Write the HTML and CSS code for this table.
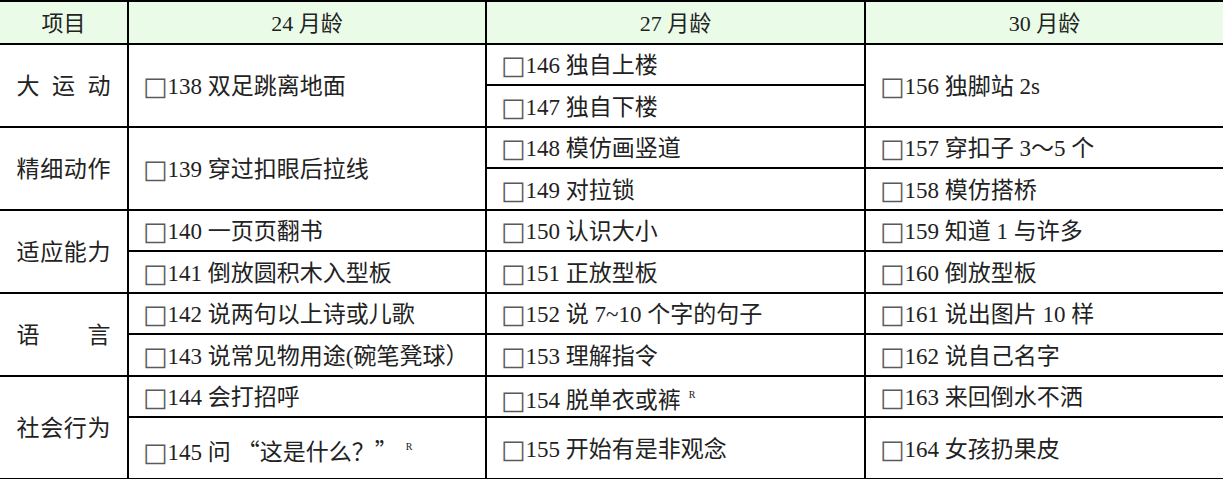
FILE: index.html
```html
<!DOCTYPE html>
<html lang="zh-CN">
<head>
<meta charset="utf-8">
<title>24-30 月龄</title>
<link rel="stylesheet" href="styles.css">
</head>
<body>
<table class="grid">
  <colgroup>
    <col class="c-label">
    <col class="c-24">
    <col class="c-27">
    <col class="c-30">
  </colgroup>
  <thead>
    <tr class="head">
      <th>项目</th>
      <th>24 月龄</th>
      <th>27 月龄</th>
      <th>30 月龄</th>
    </tr>
  </thead>
  <tbody>
    <tr>
      <td class="label" rowspan="2"><span class="lbl">大 运 动</span></td>
      <td rowspan="2"><span class="box">□</span>138 双足跳离地面</td>
      <td><span class="box">□</span>146 独自上楼</td>
      <td rowspan="2"><span class="box">□</span>156 独脚站 2s</td>
    </tr>
    <tr>
      <td><span class="box">□</span>147 独自下楼</td>
    </tr>
    <tr>
      <td class="label" rowspan="2"><span class="lbl">精细动作</span></td>
      <td rowspan="2"><span class="box">□</span>139 穿过扣眼后拉线</td>
      <td><span class="box">□</span>148 模仿画竖道</td>
      <td><span class="box">□</span>157 穿扣子 3～5 个</td>
    </tr>
    <tr>
      <td><span class="box">□</span>149 对拉锁</td>
      <td><span class="box">□</span>158 模仿搭桥</td>
    </tr>
    <tr>
      <td class="label" rowspan="2"><span class="lbl">适应能力</span></td>
      <td><span class="box">□</span>140 一页页翻书</td>
      <td><span class="box">□</span>150 认识大小</td>
      <td><span class="box">□</span>159 知道 1 与许多</td>
    </tr>
    <tr>
      <td><span class="box">□</span>141 倒放圆积木入型板</td>
      <td><span class="box">□</span>151 正放型板</td>
      <td><span class="box">□</span>160 倒放型板</td>
    </tr>
    <tr>
      <td class="label" rowspan="2"><span class="lbl">语 言</span></td>
      <td><span class="box">□</span>142 说两句以上诗或儿歌</td>
      <td><span class="box">□</span>152 说 7~10 个字的句子</td>
      <td><span class="box">□</span>161 说出图片 10 样</td>
    </tr>
    <tr>
      <td><span class="box">□</span>143 说常见物用途(碗笔凳球）</td>
      <td><span class="box">□</span>153 理解指令</td>
      <td><span class="box">□</span>162 说自己名字</td>
    </tr>
    <tr>
      <td class="label" rowspan="2"><span class="lbl">社会行为</span></td>
      <td><span class="box">□</span>144 会打招呼</td>
      <td><span class="box">□</span>154 脱单衣或裤<sup class="r">R</sup></td>
      <td><span class="box">□</span>163 来回倒水不洒</td>
    </tr>
    <tr class="last">
      <td><span class="box">□</span>145 问<span class="q">“这是什么？”</span><sup class="r">R</sup></td>
      <td><span class="box">□</span>155 开始有是非观念</td>
      <td><span class="box">□</span>164 女孩扔果皮</td>
    </tr>
  </tbody>
</table>
</body>
</html>
```

FILE: styles.css
```css
html, body {
  margin: 0;
  padding: 0;
  background: #ffffff;
  overflow: hidden;
}

.grid {
  border-collapse: collapse;
  table-layout: fixed;
  width: 1223px;
  font-family: "Liberation Serif", "Noto Sans CJK SC", serif;
  font-size: 23px;
  color: #222222;
}

.c-label { width: 128px; }
.c-24 { width: 358px; }
.c-27 { width: 379px; }
.c-30 { width: 358px; }

.grid th,
.grid td {
  border: 2px solid #000;
  padding: 4px 0 0 16px;
  height: 35.5px;
  line-height: 26px;
  vertical-align: middle;
  text-align: left;
  white-space: nowrap;
  font-weight: normal;
}

.grid tr > :first-child { border-left: none; }
.grid tr > :last-child { border-right: none; }
.grid tbody tr:first-child > td:nth-child(2) { border-right: 2px solid #000; }

.head th {
  background: #eafce7;
  text-align: center;
  padding: 4px 0 0 0;
  height: 36.5px;
  font-size: 22px;
}

.grid td.label {
  text-align: center;
  padding: 4px 0 0 0;
  border-right: 2px solid #000;
}

.lbl {
  display: inline-block;
  width: 94px;
  text-align: justify;
  text-align-last: justify;
}

.box {
  display: inline-block;
  font-family: "DejaVu Sans", sans-serif;
  font-size: 26px;
  line-height: 20px;
  color: #5a5a5a;
  margin-left: -2px;
  margin-right: 0;
  vertical-align: -1px;
}

.r {
  font-size: 10px;
  vertical-align: 10px;
  margin-left: 8px;
}

.q {
  font-family: "Noto Sans CJK SC", sans-serif;
  margin-left: 6px;
}

.last td { height: 56px; }
```
